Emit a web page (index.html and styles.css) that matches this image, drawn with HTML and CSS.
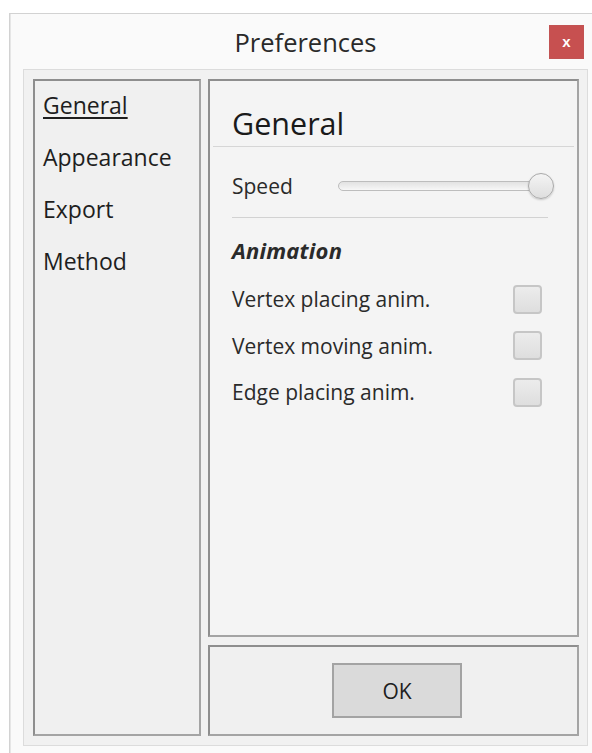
FILE: index.html
```html
<!DOCTYPE html>
<html lang="en">
<head>
<meta charset="utf-8">
<title>Preferences</title>
<link rel="stylesheet" href="styles.css">
</head>
<body>
<div class="window">
  <div class="titlebar">
    <div class="title">Preferences</div>
    <button class="close" type="button">x</button>
  </div>
  <div class="frame">
    <nav class="nav">
      <div class="nav-item active">General</div>
      <div class="nav-item">Appearance</div>
      <div class="nav-item">Export</div>
      <div class="nav-item">Method</div>
    </nav>
    <div class="main">
      <section class="content">
        <h1 class="heading">General</h1>
        <div class="rule-full"></div>
        <div class="body">
          <div class="speed-row">
            <span class="label">Speed</span>
            <div class="slider">
              <div class="track"></div>
              <div class="thumb"></div>
            </div>
          </div>
          <div class="rule"></div>
          <div class="group-title">Animation</div>
          <div class="check-row"><span class="label">Vertex placing anim.</span><span class="checkbox"></span></div>
          <div class="check-row"><span class="label">Vertex moving anim.</span><span class="checkbox"></span></div>
          <div class="check-row"><span class="label">Edge placing anim.</span><span class="checkbox"></span></div>
        </div>
      </section>
      <div class="actions">
        <button class="ok" type="button">OK</button>
      </div>
    </div>
  </div>
</div>
</body>
</html>
```

FILE: styles.css
```css
html, body {
  margin: 0;
  padding: 0;
  background: #ffffff;
  overflow: hidden;
}

body {
  font-family: "Open Sans", "Noto Sans", sans-serif;
  color: #222222;
  width: 592px;
  height: 753px;
}

.window {
  margin: 13px 0 0 9px;
  width: 590px;
  height: 760px;
  box-sizing: border-box;
  border: 1px solid #d2d2d2;
  border-right: none;
  background: #fafafa;
  box-shadow: inset 1px 0 0 #e6e6e6;
  display: flex;
  flex-direction: column;
}

.titlebar {
  height: 55px;
  display: flex;
  align-items: flex-start;
  position: relative;
}

.title {
  flex: 1;
  text-align: center;
  font-size: 25.5px;
  line-height: 34px;
  padding: 11px 0 0 2px;
  color: #2a2a2a;
}

/* window close button overlays the title bar */
.close {
  position: absolute;
  right: 15px;
  top: 11px;
  width: 35px;
  height: 34px;
  border: 1px solid #c25353;
  background: #c75050;
  color: #ffffff;
  font-family: "Liberation Sans", sans-serif;
  font-weight: bold;
  font-size: 15px;
  line-height: 28px;
  padding: 0;
}

.frame {
  margin-left: 13px;
  width: 565px;
  height: 677px;
  box-sizing: border-box;
  border: 1px solid #dcdcdc;
  background: #f1f1f1;
  padding: 9px 8px 9px 9px;
  display: flex;
  gap: 7px;
}

.nav {
  width: 168px;
  box-sizing: border-box;
  border: 2px solid #939393;
  border-color: #8e8e8e #a4a4a4 #a4a4a4 #8e8e8e;
  background: #f0f0f0;
  padding: 0 0 0 8px;
}

.nav-item {
  font-size: 23px;
  line-height: 52px;
  color: #1e1e1e;
}

.nav-item:first-child {
  margin-top: -2.5px;
}

.nav-item.active {
  text-decoration: underline;
  text-decoration-thickness: 2px;
  text-underline-offset: 3px;
}

.main {
  flex: 1;
  display: flex;
  flex-direction: column;
  gap: 8px;
}

.content {
  flex: 1;
  box-sizing: border-box;
  border: 2px solid #939393;
  border-color: #8e8e8e #a4a4a4 #a4a4a4 #8e8e8e;
  background: #f4f4f4;
  padding: 0 3px;
}

.heading {
  margin: 21px 0 0 19px;
  font-weight: normal;
  font-size: 30.5px;
  line-height: 42px;
  color: #1a1a1a;
}

.rule-full {
  margin-top: 2px;
  height: 1px;
  background: #d6d6d6;
}

.body {
  padding: 0 26px 0 19px;
}

.label {
  font-size: 21px;
  line-height: 30px;
  color: #2a2a2a;
}

.speed-row {
  margin-top: 24px;
  height: 30px;
  display: flex;
  align-items: center;
}

.slider {
  position: relative;
  margin-left: 45px;
  flex: 1;
  height: 26px;
}

.track {
  position: absolute;
  left: 0;
  right: 6px;
  top: 8px;
  height: 10px;
  box-sizing: border-box;
  border: 1px solid #bdbdbd;
  border-radius: 5px;
  background: linear-gradient(#e2e2e2, #f7f7f7);
}

.thumb {
  position: absolute;
  right: -6px;
  top: 0;
  width: 26px;
  height: 26px;
  box-sizing: border-box;
  border-radius: 50%;
  border: 1px solid #a9a9a9;
  background: linear-gradient(#f4f4f4, #dedede);
  box-shadow: 0 1px 2px rgba(0, 0, 0, 0.18);
}

.rule {
  margin-top: 16px;
  height: 1px;
  background: #d2d2d2;
}

.group-title {
  margin-top: 17px;
  font-size: 22px;
  line-height: 30px;
  font-weight: bold;
  font-style: italic;
  letter-spacing: 0.2px;
  color: #2a2a2a;
}

.check-row {
  height: 46.5px;
  display: flex;
  align-items: center;
  justify-content: space-between;
  padding-right: 6px;
}

.group-title + .check-row {
  margin-top: 11px;
}

.checkbox {
  width: 29px;
  height: 29px;
  box-sizing: border-box;
  border: 2px solid #c6c6c6;
  border-radius: 4px;
  background: linear-gradient(#ececec, #dedede);
}

.actions {
  height: 91px;
  box-sizing: border-box;
  border: 2px solid #939393;
  border-color: #8e8e8e #a4a4a4 #a4a4a4 #8e8e8e;
  background: #f0f0f0;
  display: flex;
  align-items: center;
  justify-content: center;
  padding-left: 7px;
}

.ok {
  width: 130px;
  height: 55px;
  box-sizing: border-box;
  border: 2px solid #a3a3a3;
  background: #dadada;
  font-family: "Open Sans", "Noto Sans", sans-serif;
  font-size: 21px;
  color: #1e1e1e;
  padding: 0;
}
```
